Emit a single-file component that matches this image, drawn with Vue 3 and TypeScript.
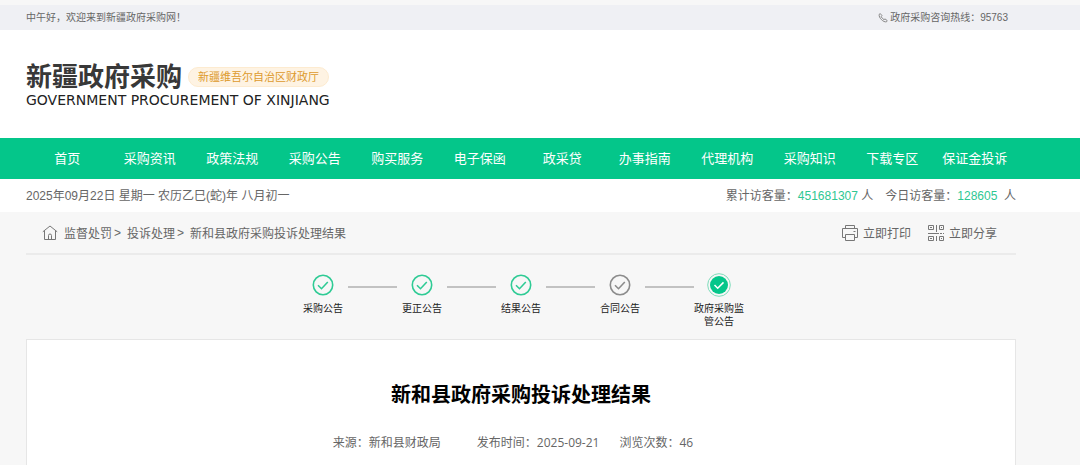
<script setup lang="ts">
interface Step {
  label: string
  state: 'done' | 'idle' | 'active'
}

const navItems: string[] = [
  '首页', '采购资讯', '政策法规', '采购公告', '购买服务', '电子保函',
  '政采贷', '办事指南', '代理机构', '采购知识', '下载专区', '保证金投诉',
]

const crumbs: string[] = ['监督处罚', '投诉处理']

const steps: Step[] = [
  { label: '采购公告', state: 'done' },
  { label: '更正公告', state: 'done' },
  { label: '结果公告', state: 'done' },
  { label: '合同公告', state: 'idle' },
  { label: '政府采购监管公告', state: 'active' },
]
</script>

<template>
  <div class="page">
    <div class="topbar">
      <div class="wrap topbar-row">
        <span>中午好，欢迎来到新疆政府采购网！</span>
        <span class="hotline">
          <svg class="phone" viewBox="0 0 10 10" aria-hidden="true">
            <path d="M1.2 1.3 2.3.6 4 2.7l-.8 1c.6 1.2 1.500 2.200 2.800 2.900l1-.7 2.200 1.700-.7 1.200C5.600 9.600.4 4.800 1.200 1.300Z" />
          </svg>
          政府采购咨询热线：95763
        </span>
      </div>
    </div>

    <header class="header">
      <div class="wrap">
        <div class="brand">
          <span class="brand-name">新疆政府采购</span>
          <span class="brand-badge">新疆维吾尔自治区财政厅</span>
        </div>
        <div class="brand-en">GOVERNMENT PROCUREMENT OF XINJIANG</div>
      </div>
    </header>

    <nav class="nav">
      <div class="wrap nav-row">
        <a v-for="item in navItems" :key="item" href="#">{{ item }}</a>
      </div>
    </nav>

    <div class="info">
      <div class="wrap info-row">
        <span>2025年09月22日 星期一 农历乙巳(蛇)年 八月初一</span>
        <span class="visits">
          <span>累计访客量：<b>451681307</b> 人</span>
          <span>今日访客量：<b>128605</b>&nbsp; 人</span>
        </span>
      </div>
    </div>

    <main class="wrap">
      <div class="crumb-row">
        <div class="crumbs">
          <svg class="home" viewBox="0 0 16 16" aria-hidden="true">
            <path d="M.8 6.800 8 1l7.200 5.800M2.500 5.800v8.700h11V5.800M6.500 14.500V10.500a1.500 1.500 0 0 1 3 0v4" />
          </svg>
          <template v-for="c in crumbs" :key="c">
            <a href="#">{{ c }}</a><span class="sep">&gt;</span>
          </template>
          <span>新和县政府采购投诉处理结果</span>
        </div>
        <div class="actions">
          <button type="button">
            <svg class="tool" viewBox="0 0 18 18" aria-hidden="true">
              <path d="M4.500 4.500v-3h9v3M4.500 13.500H1.500v-9h15v9h-3M4.500 10.500h9v6h-9zM12.500 7.500h2" />
            </svg>
            立即打印
          </button>
          <button type="button">
            <svg class="tool" viewBox="0 0 18 18" aria-hidden="true">
              <path d="M1.500 1.500h5v4h-5zM12.500 1.500h4v4h-4zM1.500 12.500h5v4h-5zM12.500 12.500h4v4h-4zM3 3.500h2M14 3.500h1M3 14.500h2M14 14.500h1M9.500 1v7M1 9.500h11M9.500 12v5M13 9.500h2M16 9.500h1" />
            </svg>
            立即分享
          </button>
        </div>
      </div>

      <ol class="steps">
        <li v-for="s in steps" :key="s.label" :class="['step', s.state]">
          <svg class="mark" viewBox="0 0 24 24" aria-hidden="true">
            <template v-if="s.state === 'active'">
              <circle class="halo" cx="12" cy="12" r="11.300" />
              <circle class="disc" cx="12" cy="12" r="9" />
              <path class="tick-light" d="m7.500 12 3.200 3.200 5.800-5.800" />
            </template>
            <template v-else>
              <circle class="ring" cx="12" cy="12" r="9.700" />
              <path class="tick" d="m7 12.300 3.500 3.400 6.300-6.700" />
            </template>
          </svg>
          <span class="label">{{ s.label }}</span>
        </li>
      </ol>

      <article class="card">
        <h1>新和县政府采购投诉处理结果</h1>
        <div class="meta">
          <span class="source">来源：新和县财政局</span>
          <span>发布时间：2025-09-21</span>
          <span>浏览次数：46</span>
        </div>
      </article>
    </main>
  </div>
</template>

<style>
body {
  background: #f7f7f7;
}
</style>

<style scoped>
.page {
  padding-top: 5px;
  overflow: hidden;
  background: #f7f7f7;
  color: #666;
  font-family: "Liberation Sans", "Noto Sans CJK SC", sans-serif;
  font-size: 12px;
}

.wrap {
  padding: 0 64px 0 26px;
}

a {
  color: inherit;
  text-decoration: none;
}

.topbar {
  background: #eff0f4;
  font-size: 10px;
  line-height: 25px;
}

.topbar-row,
.info-row,
.crumb-row {
  display: flex;
  justify-content: space-between;
}

.hotline {
  display: flex;
  align-items: center;
  gap: 2px;
  padding-right: 8px;
}

.phone {
  width: 10px;
  height: 10px;
  fill: none;
  stroke: #888;
}

.header {
  height: 76px;
  padding-top: 32px;
  background: #fff;
}

.brand {
  display: flex;
  align-items: center;
  gap: 6px;
  height: 30px;
}

.brand-name {
  color: #383838;
  font-size: 26px;
  font-weight: 700;
  line-height: 30px;
}

.brand-badge {
  padding: 0 9px;
  border: 1px solid #fdebd0;
  border-radius: 10px;
  background: #fef3e3;
  color: #dd9a2c;
  font-size: 11px;
  line-height: 18px;
}

.brand-en {
  color: #222;
  font-family: "DejaVu Sans", sans-serif;
  font-size: 14px;
  line-height: 16px;
}

.nav {
  background: #04c68a;
  color: #fff;
  font-size: 13px;
  line-height: 41px;
}

.nav-row {
  display: grid;
  grid-template-columns: repeat(12, 1fr);
  text-align: center;
}

.nav a {
  white-space: nowrap;
}

.info {
  padding-top: 1px;
  background: #fff;
  line-height: 32px;
}

.visits {
  display: flex;
  gap: 12px;
}

.visits b {
  color: #2ec792;
  font-weight: 400;
}

.crumb-row {
  align-items: center;
  height: 41px;
  padding: 0 19px 0 16px;
  border-bottom: 2px solid #ebebeb;
}

.crumbs {
  display: flex;
  align-items: center;
}

.home {
  width: 16px;
  height: 16px;
  margin-right: 6px;
  fill: none;
  stroke: #777;
}

.sep {
  margin: 0 6px 0 2px;
}

.actions {
  display: flex;
  gap: 16px;
}

button {
  display: flex;
  align-items: center;
  gap: 4px;
  padding: 0;
  border: 0;
  background: none;
  color: inherit;
  font: inherit;
}

.tool {
  width: 18px;
  height: 18px;
  fill: none;
  stroke: #777;
}

.steps {
  display: flex;
  justify-content: center;
  gap: 49px;
  min-height: 66px;
  margin: 0;
  padding: 18px 0 0;
  list-style: none;
}

.step {
  position: relative;
  display: flex;
  flex-direction: column;
  align-items: center;
  width: 50px;
}

.step + .step::before {
  position: absolute;
  top: 13px;
  right: 100%;
  width: 49px;
  height: 2px;
  background: #c2c2c2;
  content: "";
}

.mark {
  width: 24px;
  height: 24px;
  fill: none;
}

.ring,
.tick {
  stroke: #2fcb95;
  stroke-width: 1.6;
}

.idle .ring,
.idle .tick {
  stroke: #8c8c8c;
}

.halo {
  stroke: #7fdcbb;
}

.disc {
  fill: #04c68a;
}

.tick-light {
  stroke: #fff;
  stroke-width: 1.5;
}

.label {
  margin-top: 5px;
  color: #222;
  font-size: 10px;
  line-height: 13px;
  text-align: center;
}

.card {
  min-height: 125px;
  border: 1px solid #e6e6e6;
  background: #fff;
  text-align: center;
}

h1 {
  margin: 40px 0 0;
  color: #000;
  font-size: 20px;
  font-weight: 700;
  line-height: 30px;
}

.meta {
  display: flex;
  justify-content: center;
  gap: 20px;
  margin-top: 23px;
  padding-right: 16px;
  font-family: "Open Sans", "Noto Sans CJK SC", sans-serif;
  line-height: 20px;
}

.source {
  margin-right: 16px;
}
</style>
